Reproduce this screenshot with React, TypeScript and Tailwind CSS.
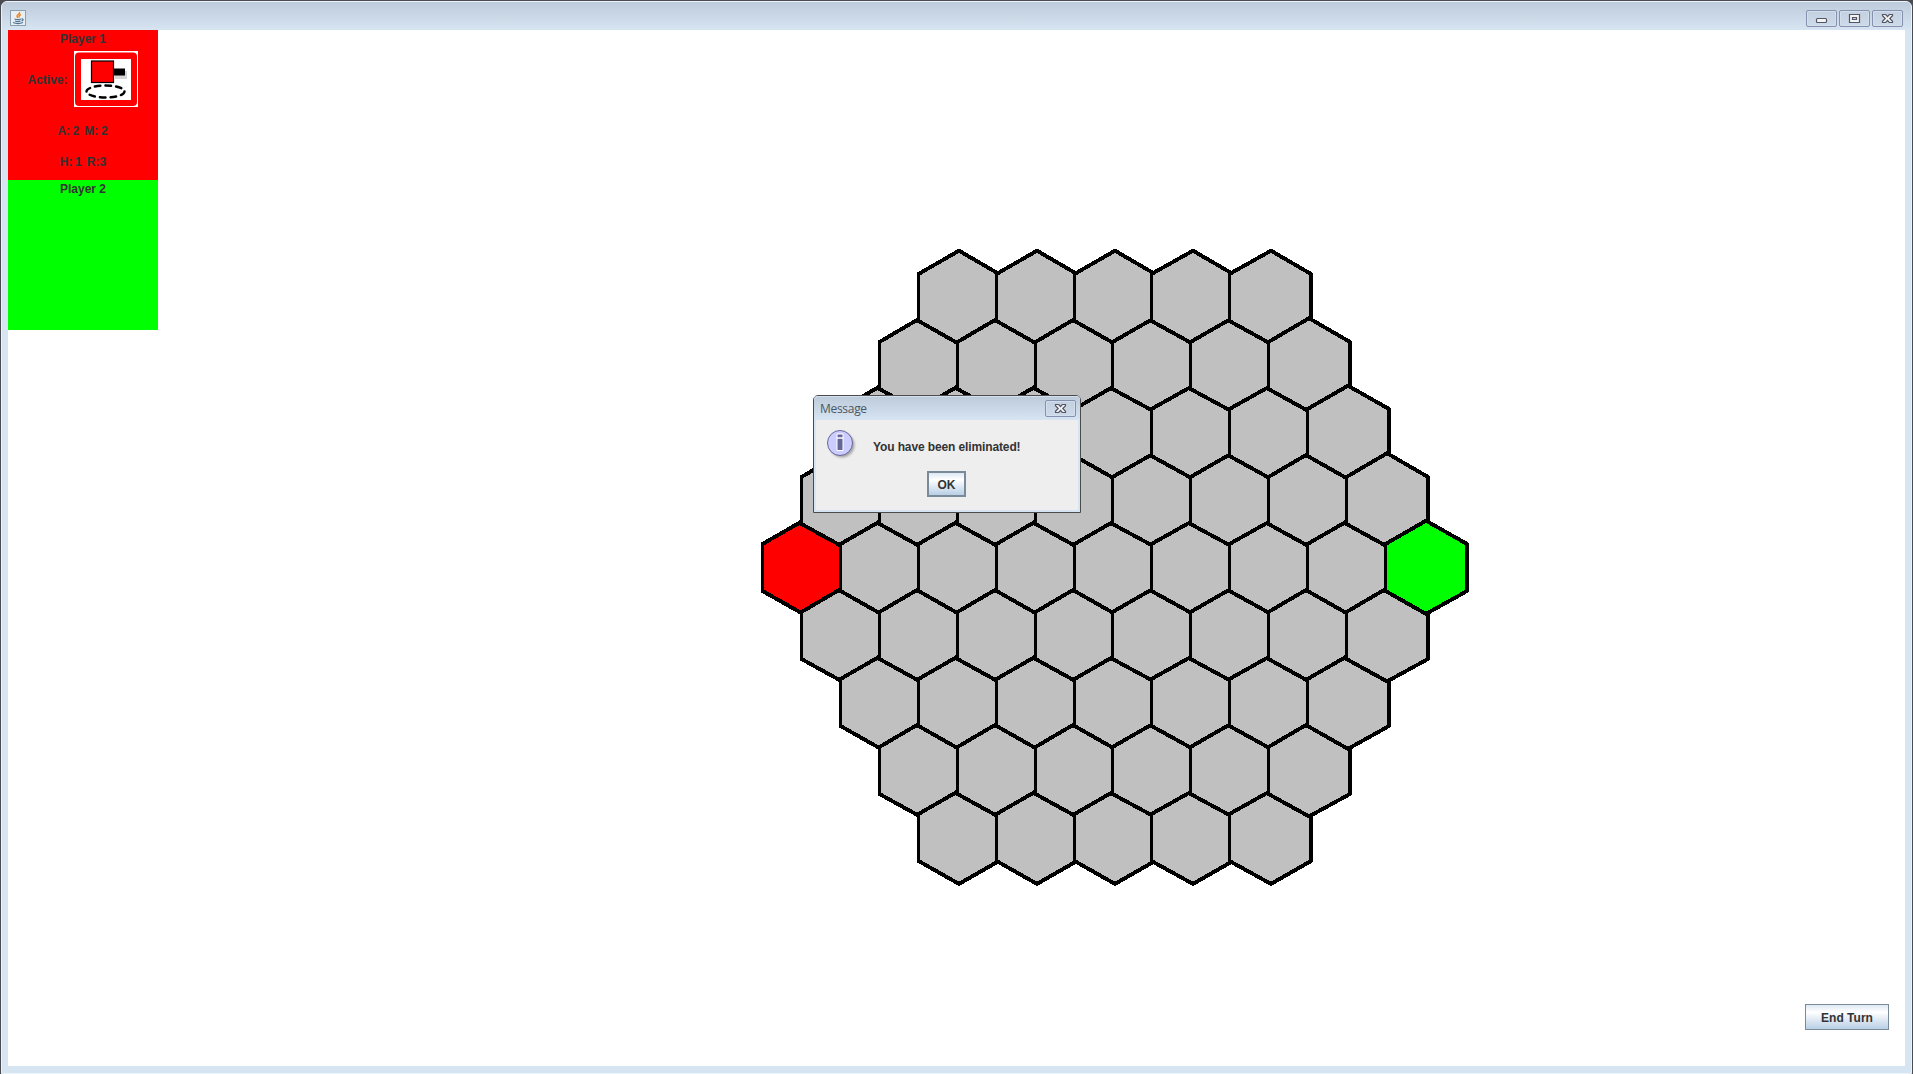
const PITCH_X = 77.94;
const PITCH_Y = 67.5;
const CENTER = { x: 1114.43, y: 567.5 };

type Hex = { x: number; y: number; fill: string };

const hexes: Hex[] = [];
for (let row = -4; row <= 4; row++) {
  const count = 9 - Math.abs(row);
  for (let i = 0; i < count; i++) {
    const fill = row === 0 && i === 0 ? '#ff0000' : row === 0 && i === count - 1 ? '#00ff00' : '#c0c0c0';
    hexes.push({ x: CENTER.x + (i - (count - 1) / 2) * PITCH_X, y: CENTER.y + row * PITCH_Y, fill });
  }
}
// Tiles overlap slightly, so paint from left to right.
hexes.sort((a, b) => a.x - b.x);

function hexPoints({ x, y }: Hex) {
  const l = Math.floor(x - 40.42) + 0.5;
  const r = Math.round(x + 40.7);
  const m = Math.round(x + 0.2);
  const t = Math.round(y - 23.5);
  const b = Math.round(y + 23.5);
  return [[m, y - 46.8], [r, t], [r, b], [m, y + 46.4], [l, b], [l, t]].map((p) => p.join(',')).join(' ');
}

function Board() {
  return (
    <svg className="block h-full w-full" viewBox="8 30 1897 1036" preserveAspectRatio="xMinYMin slice" shapeRendering="crispEdges">
      {hexes.map((h, i) => (
        <polygon key={i} points={hexPoints(h)} fill={h.fill} stroke="#000" strokeWidth="3.9" />
      ))}
    </svg>
  );
}

function WindowButton({ kind }: { kind: 'min' | 'max' | 'close' }) {
  return (
    <div className="flex h-[17px] w-[31px] items-center justify-center rounded-[2px] border border-[#8591ae] bg-linear-to-b from-[#c3d0df] to-[#cddaea] shadow-[inset_0_0_0_1px_#d3dfec]">
      {kind === 'min' && (
        <svg width="13" height="13" viewBox="0 0 13 13">
          <rect x="1.5" y="6.5" width="10" height="4" rx="1" fill="#f4f4f4" stroke="#535666" strokeWidth="1.2" />
        </svg>
      )}
      {kind === 'max' && (
        <svg width="13" height="13" viewBox="0 0 13 13">
          <path d="M1.5 2.5h10v8h-10zM4.5 5.5v2h4v-2z" fill="#f4f4f4" fillRule="evenodd" stroke="#535666" strokeWidth="1.2" />
        </svg>
      )}
      {kind === 'close' && (
        <svg width="13" height="13" viewBox="0 0 13 13">
          <path d="M1.500 2.500h3.200l1.800 2 1.800-2h3.200v1.200L8.800 6.500l2.700 2.800v1.200H8.300l-1.800-2-1.800 2H1.500V9.300l2.700-2.800-2.700-2.800z" fill="#f4f4f4" stroke="#535666" strokeWidth="1.2" />
        </svg>
      )}
    </div>
  );
}

function JavaIcon() {
  return (
    <svg className="h-4 w-4" viewBox="0 0 16 16">
      <rect x=".5" y=".5" width="15" height="15" fill="#e9eef2" stroke="#8aa0b0" />
      <path d="M9.500 2c1 2-3.500 3-2.500 4.500L8 8M11 4.500C9 5.500 8.500 6 9.500 7.500" fill="none" stroke="#e8852a" strokeWidth="1.400" />
      <path d="M4.500 9c2 .8 4.500.8 6.500 0M5 11c2 .7 4 .7 5.500 0M3 12.500c3 1.300 7 1.300 10 0M11.500 9c2.200-.5 2 1.500 0 2" fill="none" stroke="#4c7392" strokeWidth="1.200" />
    </svg>
  );
}

function TankIcon() {
  return (
    <svg className="h-14 w-16" viewBox="0 0 64 56">
      <rect width="64" height="56" fill="#fff" />
      <rect x="1" y="1.500" width="62" height="53.500" rx="4" fill="#f00" />
      <rect x="7" y="8" width="50" height="41" fill="#fff" />
      <rect x="41" y="20" width="12" height="8" fill="#999" opacity=".4" />
      <rect x="39" y="17.500" width="12" height="7" fill="#000" />
      <rect x="17.500" y="10" width="22" height="21.500" fill="#f00" stroke="#000" strokeWidth="1.200" />
      <ellipse cx="31.500" cy="40.500" rx="19" ry="6" fill="none" stroke="#000" strokeWidth="2.400" strokeDasharray="5.500 4.900" strokeLinecap="round" />
    </svg>
  );
}

const metalButton = 'flex items-center justify-center border-[#7a8a99] bg-[linear-gradient(180deg,#dde8f3_0%,#ffffff_30%,#b8cfe5_100%)]';

export default function App() {
  return (
    <div className="relative flex h-[1074px] w-[1913px] flex-col overflow-hidden bg-[#4b4b52] font-['Liberation_Sans',sans-serif] text-[12px] font-bold leading-[15px] text-[#333333]">
      <div className="m-px flex flex-1 flex-col rounded-t-[6px] border border-[#eaf2fa] bg-[#d7e4f2] px-[6px] pb-[7px]">
        <header className="-mx-[6px] flex h-7 shrink-0 items-start justify-between rounded-t-[5px] bg-linear-to-b from-[#bdcbdb] to-[#d7e4f2] pr-2 pl-2">
          <div className="pt-2"><JavaIcon /></div>
          <div className="flex gap-[2px] pt-2">
            <WindowButton kind="min" />
            <WindowButton kind="max" />
            <WindowButton kind="close" />
          </div>
        </header>
        <main className="relative min-h-0 flex-1 bg-white">
          <Board />
          <aside className="absolute top-0 left-0 w-[150px] text-center">
            <section className="flex h-[150px] flex-col items-center bg-[#ff0000]">
              <div className="pt-[2px]">Player 1</div>
              <div className="mt-1 flex items-center gap-[6px] pr-[2px]">
                <span className="pt-[2px] pl-px">Active:</span>
                <TankIcon />
              </div>
              <div className="mt-[17px] mr-px whitespace-pre [word-spacing:-0.8px]">A: 2  M: 2</div>
              <div className="mt-4 whitespace-pre [word-spacing:-0.8px]">H: 1  R:3</div>
            </section>
            <section className="h-[150px] bg-[#00ff00] pt-[2px]">Player 2</section>
          </aside>
          <button className={`${metalButton} absolute right-4 bottom-9 h-[26px] w-[84px] border pt-[2px]`}>End Turn</button>
        </main>
      </div>
      <div className="absolute top-[395px] left-[813px] flex h-[118px] w-[268px] flex-col rounded-t-[5px] border border-[#4b4b4b] bg-[#d7e4f2] px-[2px] pb-[2px]">
        <div className="-mx-[2px] flex h-6 shrink-0 items-start justify-between rounded-t-[4px] bg-linear-to-b from-[#bccada] to-[#d7e4f2] pr-1 pl-[6px] shadow-[inset_0_1px_0_#d4e0ec]">
          <span className="pt-[5px] font-['Open_Sans',sans-serif] text-[12px] font-normal tracking-[-0.3px] text-[#4d5763]">Message</span>
          <div className="pt-1"><WindowButton kind="close" /></div>
        </div>
        <div className="flex flex-1 flex-col items-center bg-[#eeeeee]">
          <div className="flex w-full items-start pt-[9px] pl-[10px]">
            <svg className="h-8 w-8" viewBox="0 0 32 32">
              <defs><filter id="soft"><feGaussianBlur stdDeviation="1.200" /></filter></defs>
              <circle cx="16" cy="16" r="12.500" fill="#777" opacity=".6" filter="url(#soft)" />
              <circle cx="14" cy="14" r="12.500" fill="#ccccff" stroke="#666699" />
              <path d="M11 5h6v4h-6zM11 9h6v12.500h-6z" fill="#666699" stroke="#fff" />
            </svg>
            <span className="pt-[11px] pl-[15px] tracking-[-0.12px]">You have been eliminated!</span>
          </div>
          <button className={`${metalButton} mt-[10px] mr-px h-[26px] w-[39px] border-2 pt-[2px]`}>OK</button>
        </div>
      </div>
    </div>
  );
}
